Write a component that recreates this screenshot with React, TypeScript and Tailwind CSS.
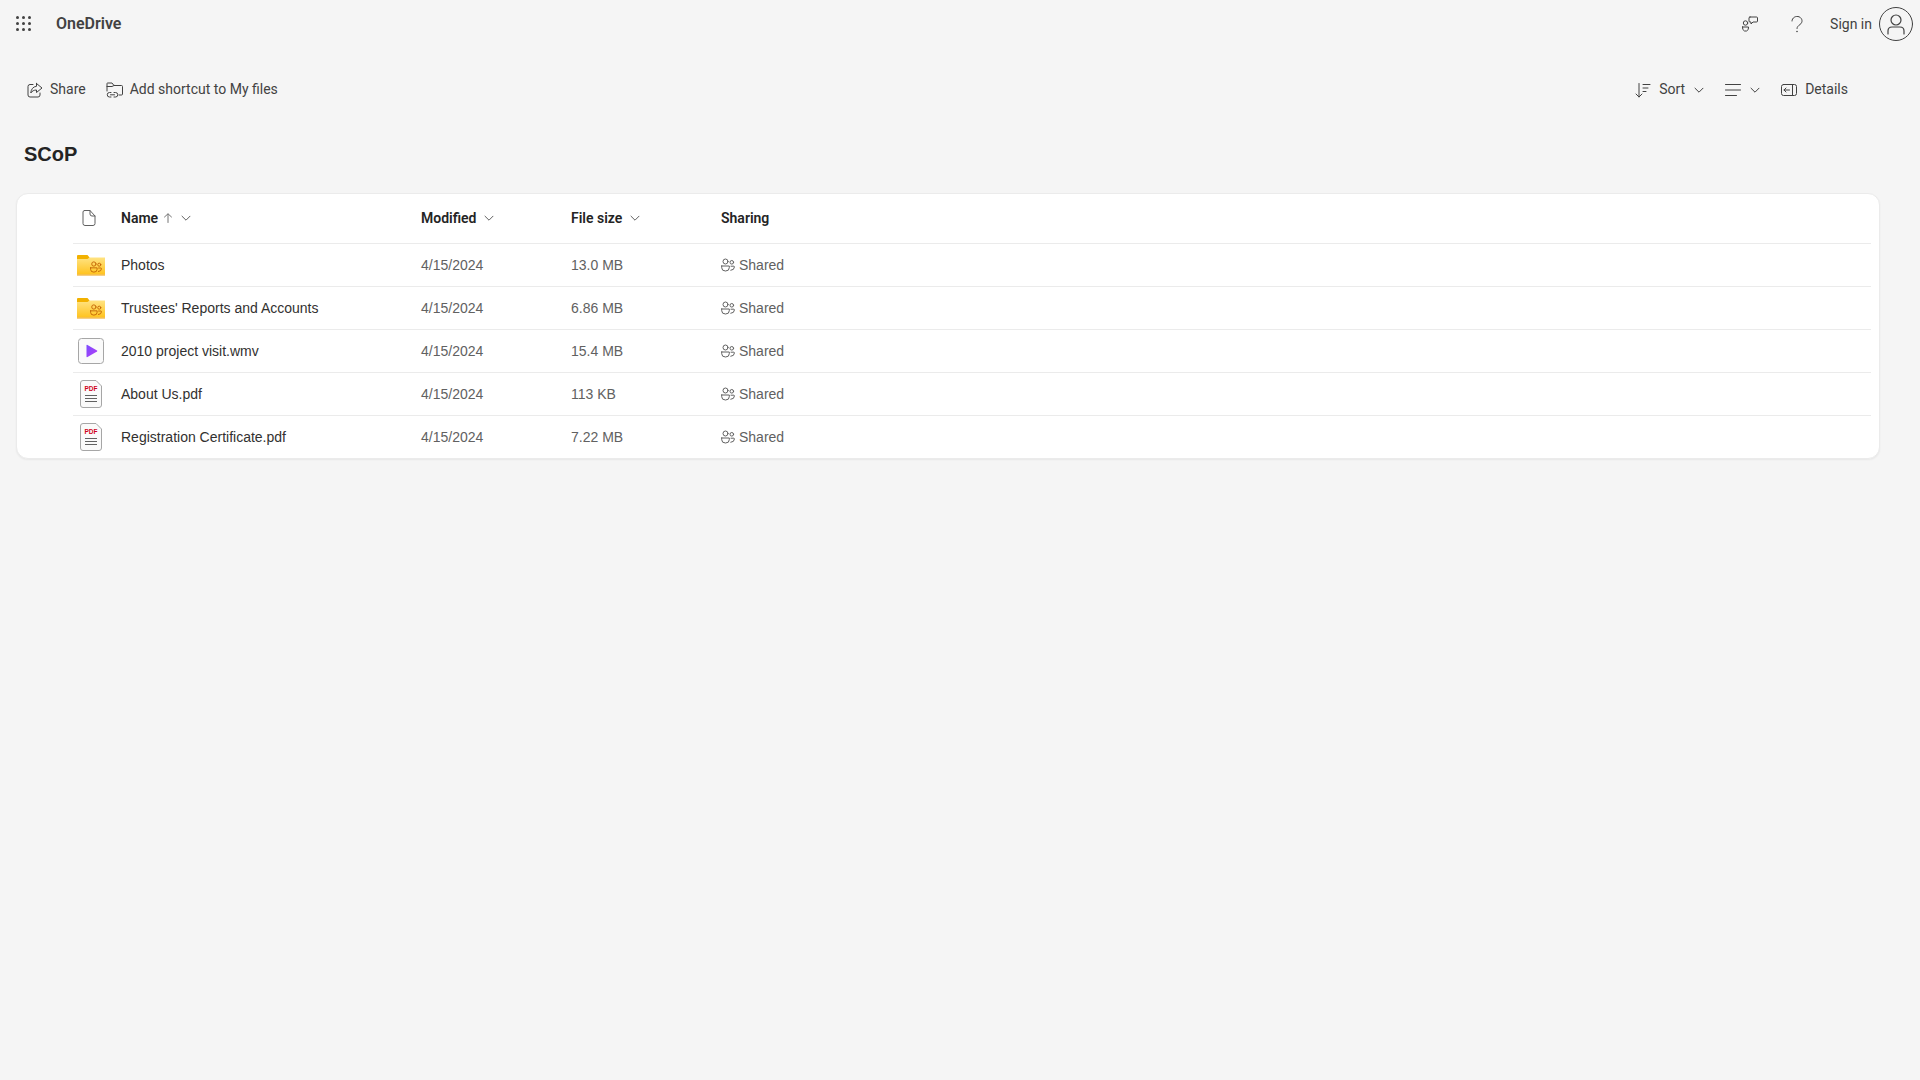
import type { ReactNode } from "react";

const stroke = {
	fill: "none",
	stroke: "currentColor",
	strokeLinecap: "round" as const,
	strokeLinejoin: "round" as const,
	strokeWidth: 1,
};

function Waffle() {
	const dots = [1.5, 7.5, 13.5];
	return (
		<svg className="h-4 w-4 text-[#424242]" viewBox="0 0 16 16">
			{dots.flatMap((y) =>
				dots.map((x) => (
					<circle cx={x} cy={y} fill="currentColor" key={`${x}-${y}`} r="1.5" />
				))
			)}
		</svg>
	);
}

function Chevron({ className }: { className?: string }) {
	return (
		<svg className={className ?? "h-2.5 w-2.5"} viewBox="0 0 10 10">
			<path {...stroke} d="M1 3.2 5 7.2 9 3.2" />
		</svg>
	);
}

function ShareIcon() {
	return (
		<svg className="h-4 w-4" viewBox="0 0 16 16">
			<path
				{...stroke}
				d="M9.5 1.5 15 6l-5.500 4.500V8C7 8 5 9 3.800 11 4 7.500 6 4.600 9.500 4.300V1.500ZM6 2.500H3A2 2 0 0 0 1 4.500v8.500a2 2 0 0 0 2 2h8a2 2 0 0 0 2-2v-2"
			/>
		</svg>
	);
}

function ShortcutIcon() {
	return (
		<svg className="h-4 w-[17px]" viewBox="0 0 17 16">
			<path
				{...stroke}
				d="M1 9V1.500Q1 1 1.500 1H6l2 2.500h7.500q1 0 1 1V12q0 1-1 1H13M1 4.500h5L8 3.500"
			/>
			<path
				{...stroke}
				d="M5 10.500H3.500a2.200 2.200 0 0 0 0 4.500H5m3-4.500h1.500a2.200 2.200 0 0 1 0 4.500H8m-3.500-2.200h4"
			/>
		</svg>
	);
}

function SortIcon() {
	return (
		<svg className="h-4 w-4" viewBox="0 0 16 16">
			<path {...stroke} d="M4 1.500V15M1 12l3 3 3-3M8 2.500h7M8 6h5M8 9.500h3" />
		</svg>
	);
}

function LinesIcon() {
	return (
		<svg className="h-3.5 w-4" viewBox="0 0 16 14">
			<path {...stroke} d="M.5 1.500h15M.5 7h15M.5 12.500h11" />
		</svg>
	);
}

function DetailsIcon() {
	return (
		<svg className="h-3.5 w-4" viewBox="0 0 16 14">
			<rect {...stroke} height="11" rx="2" width="15" x=".5" y="1.500" />
			<path {...stroke} d="M11.500 1.500v11M8.500 7H3M5 5 3 7l2 2" />
		</svg>
	);
}

function FeedbackIcon() {
	return (
		<svg className="h-4 w-4" viewBox="0 0 16 16">
			<circle {...stroke} cx="3.500" cy="7" r="2.200" />
			<path {...stroke} d="M.5 11h6q.5 3-2 4h-2q-2.500-1-2-4Z" />
			<path {...stroke} d="M8 1h6.500q1 0 1 1v3q0 1-1 1H11L9 8V6H8q-1 0-1-1V2q0-1 1-1Z" />
		</svg>
	);
}

function HelpIcon() {
	return (
		<svg className="h-[17px] w-3" viewBox="0 0 12 17">
			<path {...stroke} d="M1 5a5 4.500 0 1 1 8 3.500C7 10 6 11 6 12.500" />
			<circle cx="6" cy="15.500" fill="currentColor" r=".8" />
		</svg>
	);
}

function Avatar() {
	return (
		<svg className="h-[34px] w-[34px]" viewBox="0 0 34 34">
			<circle {...stroke} cx="17" cy="17" r="16.500" />
			<circle {...stroke} cx="17" cy="13" r="5" strokeWidth="1.200" />
			<path {...stroke} d="M9 27v-3q0-4 4-4h8q4 0 4 4v3" strokeWidth="1.200" />
		</svg>
	);
}

function DocIcon() {
	return (
		<svg className="h-4 w-3.5 text-[#616161]" viewBox="0 0 14 16">
			<path
				{...stroke}
				d="M2.500.5H8l5 5.500v7.500q0 2-2 2H3q-2 0-2-2V2Q1 .5 2.500.5ZM8 .5V4q0 2 2 2h3"
			/>
		</svg>
	);
}

function ArrowUp() {
	return (
		<svg className="h-2.5 w-2.5 text-[#757575]" viewBox="0 0 10 10">
			<path {...stroke} d="M5 9.500V1M1.500 4 5 .8 8.500 4" />
		</svg>
	);
}

function PeopleIcon({ className }: { className?: string }) {
	return (
		<svg className={className} viewBox="0 0 14 14">
			<circle {...stroke} cx="4.500" cy="3.500" r="2.500" />
			<circle {...stroke} cx="10.800" cy="4.300" r="1.800" />
			<path {...stroke} d="M.7 8h7.600v1.700q0 3.300-3.800 3.300T.7 9.700V8Z" />
			<path {...stroke} d="M10 8.200h2.800q.6 0 .6.800 0 3-3.600 3.300" />
		</svg>
	);
}

function FolderGlyph() {
	return (
		<span className="relative block h-[21px] w-[28px]">
			<svg className="h-[21px] w-[28px]" viewBox="0 0 28 21">
				<defs>
					<linearGradient id="folderFill" x1="0" x2="0" y1="0" y2="1">
						<stop offset="0" stopColor="#ffe382" />
						<stop offset="1" stopColor="#ffc31f" />
					</linearGradient>
				</defs>
				<rect fill="url(#folderFill)" height="17" width="28" y="2.500" />
				<path d="M0 1q0-1 1-1h9.500l2 2.500-2 1.500H0Z" fill="#f2b100" />
				<rect fill="#ed9f0b" height="1" width="28" y="19.500" />
			</svg>
			<PeopleIcon className="absolute top-[6px] left-[13px] h-3 w-3 text-[#bf5f00]" />
		</span>
	);
}

function VideoIcon() {
	return (
		<svg className="h-[26px] w-[26px]" viewBox="0 0 26 26">
			<defs>
				<linearGradient id="playFill" x1="0" x2="1" y1="0" y2="1">
					<stop offset="0" stopColor="#7b4dff" />
					<stop offset="1" stopColor="#b23cf5" />
				</linearGradient>
			</defs>
			<rect fill="#fafafa" height="25" rx="3" stroke="#a6a6a6" width="25" x=".5" y=".5" />
			<path d="M8.500 7.500q0-1 1-.5l9.500 5.500q.8.500 0 1L9.500 19q-1 .5-1-.5Z" fill="url(#playFill)" />
		</svg>
	);
}

function PdfIcon() {
	return (
		<svg className="h-7 w-[22px]" viewBox="0 0 22 28">
			<path
				d="M3 .5h13l5.500 5.500V25q0 2.500-2.500 2.500H3Q.5 27.500.5 25V3Q.5.5 3 .5Z"
				fill="#fafafa"
				stroke="#a6a6a6"
			/>
			<text
				fill="#d0021b"
				fontFamily="'Liberation Sans', sans-serif"
				fontSize="6.500"
				fontWeight="700"
				textAnchor="middle"
				x="11"
				y="11"
			>
				PDF
			</text>
			<path d="M5 15.500h12M5 18.500h12M5 21.500h12" stroke="#616161" />
		</svg>
	);
}

function ToolButton({
	icon,
	children,
	className,
}: {
	icon: ReactNode;
	children?: ReactNode;
	className?: string;
}) {
	return (
		<button
			className={`flex items-center text-[#424242] text-sm [&>svg]:translate-y-[1px] ${className ?? ""}`}
			type="button"
		>
			{icon}
			{children}
		</button>
	);
}

interface Row {
	name: string;
	size: string;
	icon: ReactNode;
}

const rows: Row[] = [
	{ name: "Photos", size: "13.0 MB", icon: <FolderGlyph /> },
	{ name: "Trustees' Reports and Accounts", size: "6.86 MB", icon: <FolderGlyph /> },
	{ name: "2010 project visit.wmv", size: "15.4 MB", icon: <VideoIcon /> },
	{ name: "About Us.pdf", size: "113 KB", icon: <PdfIcon /> },
	{ name: "Registration Certificate.pdf", size: "7.22 MB", icon: <PdfIcon /> },
];

export default function App() {
	return (
		<div className="min-h-screen bg-[#f5f5f5] font-['Roboto',sans-serif] text-[#242424]">
			<header className="flex h-12 items-center justify-between pr-[7px] pl-4">
				<div className="flex items-center">
					<Waffle />
					<span className="ml-[24px] font-semibold text-[#424242] text-base">
						OneDrive
					</span>
				</div>
				<div className="flex items-center text-[#424242]">
					<FeedbackIcon />
					<span className="ml-[33px]">
						<HelpIcon />
					</span>
					<span className="ml-[27px] text-sm">Sign in</span>
					<span className="ml-[7px]">
						<Avatar />
					</span>
				</div>
			</header>

			<div className="mt-[21px] flex h-10 items-center justify-between pr-[72px] pl-[27px]">
				<div className="flex items-center">
					<ToolButton icon={<ShareIcon />}>
						<span className="ml-[7px]">Share</span>
					</ToolButton>
					<ToolButton className="ml-[20px]" icon={<ShortcutIcon />}>
						<span className="ml-[7px]">Add shortcut to My files</span>
					</ToolButton>
				</div>
				<div className="flex items-center">
					<ToolButton icon={<SortIcon />}>
						<span className="ml-[8px]">Sort</span>
						<Chevron className="ml-[9px] h-2.5 w-2.5" />
					</ToolButton>
					<ToolButton className="ml-[21px]" icon={<LinesIcon />}>
						<Chevron className="ml-[9px] h-2.5 w-2.5" />
					</ToolButton>
					<ToolButton className="ml-[21px]" icon={<DetailsIcon />}>
						<span className="ml-[8px]">Details</span>
					</ToolButton>
				</div>
			</div>

			<h1 className="mt-[33px] ml-6 font-['Liberation_Sans',sans-serif] font-bold text-[20px] leading-6">
				SCoP
			</h1>

			<div className="mt-[27px] mr-[40px] ml-[16px] rounded-xl border border-[#ebebeb] bg-white shadow-[0_1px_2px_rgba(0,0,0,0.06)]">
				<div className="mr-[8px] ml-[56px] grid h-[50px] grid-cols-[48px_300px_150px_150px_1fr] items-center border-[#ebebeb] border-b pb-[2px] font-semibold text-[#242424] text-sm">
					<span className="pl-[9px]">
						<DocIcon />
					</span>
					<span className="flex items-center">
						Name
						<span className="ml-[5px]">
							<ArrowUp />
						</span>
						<Chevron className="ml-[8px] h-2.5 w-2.5 text-[#616161]" />
					</span>
					<span className="flex items-center">
						Modified
						<Chevron className="ml-[8px] h-2.5 w-2.5 text-[#616161]" />
					</span>
					<span className="flex items-center">
						File size
						<Chevron className="ml-[8px] h-2.5 w-2.5 text-[#616161]" />
					</span>
					<span>Sharing</span>
				</div>
				{rows.map((row, i) => (
					<div
						className={`mr-[8px] ml-[56px] grid grid-cols-[48px_300px_150px_150px_1fr] items-center font-['Liberation_Sans',sans-serif] text-[#323130] text-sm ${
							i < rows.length - 1 ? "h-[43px] border-[#ebebeb] border-b" : "h-[42px]"
						}`}
						key={row.name}
					>
						<span className="flex w-[36px] justify-center">{row.icon}</span>
						<span>{row.name}</span>
						<span className="text-[#616161]">4/15/2024</span>
						<span className="text-[#616161]">{row.size}</span>
						<span className="flex items-center text-[#616161]">
							<PeopleIcon className="mr-[4px] h-3.5 w-3.5" />
							Shared
						</span>
					</div>
				))}
			</div>
		</div>
	);
}
